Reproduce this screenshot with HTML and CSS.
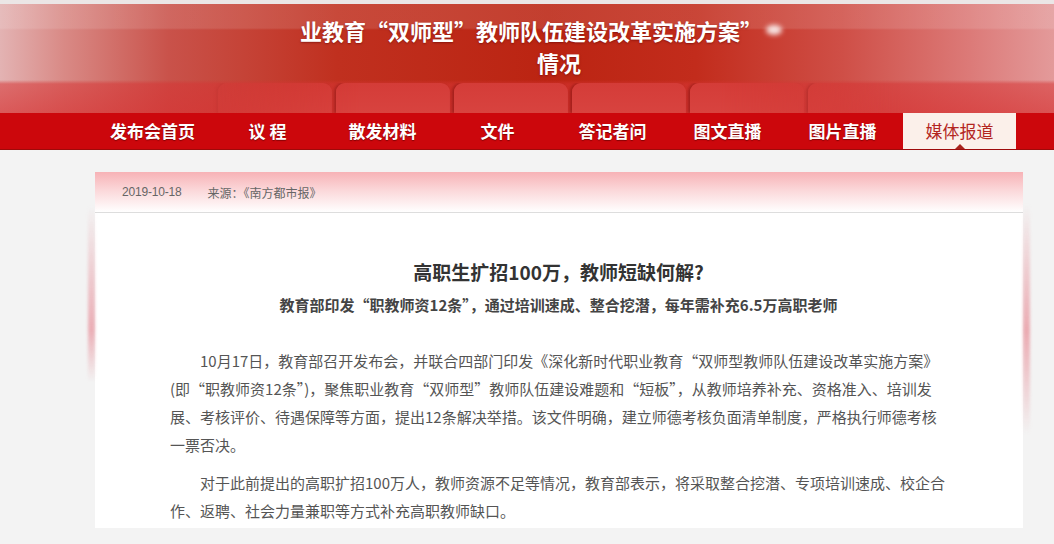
FILE: index.html
```html
<!DOCTYPE html>
<html lang="zh-CN">
<head>
    <meta charset="UTF-8">
    <meta name="viewport" content="width=device-width, initial-scale=1.0">
    <title>媒体报道</title>
    <link rel="stylesheet" href="styles.css">
</head>
<body>
    <header class="banner">
        <div class="banner-title">
            <div class="line-one">业教育“双师型”教师队伍建设改革实施方案”<span class="glare"></span></div>
            <div class="line-two">情况</div>
        </div>
        <div class="seats">
            <span class="seat"></span>
            <span class="seat"></span>
            <span class="seat"></span>
            <span class="seat"></span>
            <span class="seat"></span>
            <span class="seat"></span>
            <span class="seat"></span>
        </div>
    </header>

    <nav class="nav">
        <ul class="nav-list">
            <li><a href="#">发布会首页</a></li>
            <li><a href="#">议&nbsp;程</a></li>
            <li><a href="#">散发材料</a></li>
            <li><a href="#">文件</a></li>
            <li><a href="#">答记者问</a></li>
            <li><a href="#">图文直播</a></li>
            <li><a href="#">图片直播</a></li>
            <li class="active"><a href="#">媒体报道</a></li>
        </ul>
    </nav>

    <main class="page">
        <article class="card">
            <div class="card-head">
                <span class="date">2019-10-18</span>
                <span class="source">来源：《南方都市报》</span>
            </div>
            <div class="card-body">
                <h1>高职生扩招100万，教师短缺何解?</h1>
                <h2>教育部印发“职教师资12条”，通过培训速成、整合挖潜，每年需补充6.5万高职老师</h2>
                <p>10月17日，教育部召开发布会，并联合四部门印发《深化新时代职业教育“双师型教师队伍建设改革实施方案》(即“职教师资12条”)，聚焦职业教育“双师型”教师队伍建设难题和“短板”，从教师培养补充、资格准入、培训发展、考核评价、待遇保障等方面，提出12条解决举措。该文件明确，建立师德考核负面清单制度，严格执行师德考核一票否决。</p>
                <p>对于此前提出的高职扩招100万人，教师资源不足等情况，教育部表示，将采取整合挖潜、专项培训速成、校企合作、返聘、社会力量兼职等方式补充高职教师缺口。</p>
            </div>
        </article>
    </main>
</body>
</html>
```

FILE: styles.css
```css
:root {
    --nav-red: #cc070c;
    --active-bg: #fbf0ea;
    --active-text: #b3261f;
    --page-bg: #f3f3f3;
    --text: #555;
}

body {
    margin: 0;
    background-color: var(--page-bg);
    font-family: "Noto Sans CJK SC", "Noto Sans", sans-serif;
}

/* top banner */
.banner {
    height: 109px;
    border-top: 4px solid #ebe6e6;
    display: flex;
    flex-direction: column;
    justify-content: space-between;
    background:
        linear-gradient(to bottom, rgba(255, 255, 255, 0.12) 0, rgba(255, 255, 255, 0.12) 24px, rgba(0, 0, 0, 0) 26px, rgba(0, 0, 0, 0) 76px, rgba(214, 52, 52, 0.55) 80px, rgba(214, 52, 52, 0.7) 100%),
        linear-gradient(to right, #e3b3b3 0%, #d98a86 6%, #c9524a 16%, #c0301f 32%, #bb2412 52%, #c22c1c 66%, #cf4f47 80%, #dc7a78 92%, #e39a9a 100%);
    overflow: hidden;
}

.banner-title {
    padding-top: 10px;
    color: #fff;
    font-size: 22px;
    font-weight: bold;
    line-height: 32px;
    text-shadow: 0 1px 2px rgba(90, 0, 0, 0.5);
}

.line-one {
    padding-left: 300px;
    display: flex;
    align-items: center;
}

.line-two {
    padding-left: 537px;
}

.glare {
    width: 16px;
    height: 10px;
    margin-left: 4px;
    border-radius: 50%;
    background-color: #fff;
    filter: blur(2.5px);
    opacity: 0.85;
}

.seats {
    display: flex;
    gap: 4px;
    padding-left: 218px;
    height: 30px;
    -webkit-mask-image: linear-gradient(to right, transparent 190px, #000 360px, #000 720px, transparent 900px);
    mask-image: linear-gradient(to right, transparent 190px, #000 360px, #000 720px, transparent 900px);
}

.seat {
    flex: 0 0 114px;
    border-radius: 9px 9px 0 0;
    background: linear-gradient(#d43c38, #d8433f);
    box-shadow: -2px 0 3px rgba(110, 10, 10, 0.45);
}

/* nav */
.nav {
    background-color: var(--nav-red);
    border-bottom: 1px solid #9e0a0a;
}

.nav-list {
    list-style: none;
    margin: 0 0 0 95px;
    padding: 0;
    display: flex;
}

.nav-list li {
    width: 115px;
    height: 36px;
    position: relative;
}

.nav-list a {
    display: block;
    text-align: center;
    line-height: 36px;
    font-size: 17px;
    font-weight: bold;
    color: #fff;
    text-decoration: none;
    text-shadow: 0 1px 1px rgba(80, 0, 0, 0.6);
}

.nav-list .active {
    background-color: var(--active-bg);
    width: 113px;
    margin-left: 3px;
}

.nav-list .active a {
    color: var(--active-text);
    font-weight: normal;
    text-shadow: none;
}

.nav-list .active::after {
    content: "";
    position: absolute;
    left: 50%;
    bottom: 0;
    margin-left: -5px;
    border: 5px solid transparent;
    border-bottom-color: #a8231c;
    border-top: 0;
}

/* article card */
.page {
    padding-top: 22px;
}

.card {
    position: relative;
    width: 928px;
    margin-left: 95px;
    background-color: #fff;
}

.card::before,
.card::after {
    content: "";
    position: absolute;
    width: 7px;
    filter: blur(1.5px);
}

.card::before {
    left: -7px;
    top: 34px;
    height: 176px;
    background: linear-gradient(rgba(236, 150, 160, 0), rgba(232, 150, 160, 0.75) 70%, rgba(236, 150, 160, 0));
}

.card::after {
    right: -7px;
    top: 32px;
    height: 230px;
    background: linear-gradient(rgba(236, 150, 160, 0), rgba(232, 140, 150, 0.7) 55%, rgba(236, 150, 160, 0));
}

.card-head {
    height: 40px;
    padding-left: 27px;
    display: flex;
    align-items: center;
    gap: 26px;
    font-size: 12px;
    color: #666;
    border-bottom: 1px solid #ddd;
    background: linear-gradient(#f7b2b6, #fbd7d9 45%, #fff 100%);
}

.date {
    font-family: "Liberation Sans", sans-serif;
    letter-spacing: -0.2px;
}

.card-body {
    padding: 45px 76px 3px 75px;
    color: var(--text);
}

.card-body h1 {
    margin: 0;
    text-align: center;
    font-size: 19px;
    line-height: 28px;
    color: #333;
}

.card-body h2 {
    margin: 7px 0 0;
    text-align: center;
    font-size: 15px;
    line-height: 24px;
    color: #444;
}

.card-body p {
    margin: 30px 0 0;
    text-indent: 2em;
    font-size: 15px;
    line-height: 28px;
}

.card-body p + p {
    margin-top: 10px;
}
```
